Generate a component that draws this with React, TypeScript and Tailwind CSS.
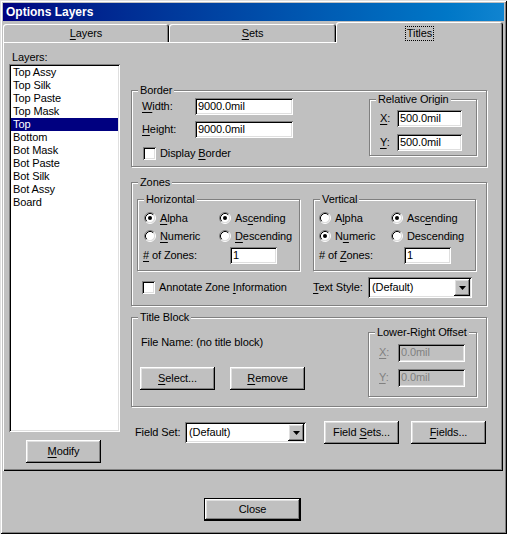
import React from 'react';

const raised =
  'bg-[#c0c0c0] shadow-[inset_-1px_-1px_0_#000,inset_1px_1px_0_#fff,inset_-2px_-2px_0_#808080,inset_2px_2px_0_#dfdfdf]';
const sunken =
  'shadow-[inset_1px_1px_0_#808080,inset_-1px_-1px_0_#fff,inset_2px_2px_0_#000,inset_-2px_-2px_0_#dfdfdf]';
const etched = 'border border-[#808080] shadow-[inset_1px_1px_0_#fff,1px_1px_0_#fff]';

// label with one underlined accelerator letter
function Acc({ text, at }: { text: string; at?: number }) {
  if (at === undefined) return <span>{text}</span>;
  return (
    <span>
      {text.slice(0, at)}
      <span className="underline underline-offset-[2px]">{text[at]}</span>
      {text.slice(at + 1)}
    </span>
  );
}

function Group({ label, className = '', children }: { label: string; className?: string; children?: React.ReactNode }) {
  return (
    <div className={`${etched} flex flex-col ${className}`}>
      <span className="-mt-[7px] ml-[6px] px-[2px] bg-[#c0c0c0] self-start h-[13px] leading-[13px]">{label}</span>
      {children}
    </div>
  );
}

function Field({ value, w, h = 17, disabled = false }: { value: string; w: number; h?: number; disabled?: boolean }) {
  return (
    <div
      className={`${sunken} ${disabled ? 'bg-[#c0c0c0] text-[#808080]' : 'bg-white text-black'} flex items-center pl-[3px] leading-[13px]`}
      style={{ width: w, height: h }}
    >
      {value}
    </div>
  );
}

function Radio({ checked }: { checked?: boolean }) {
  return (
    <svg width="12" height="12" viewBox="0 0 12 12" className="shrink-0">
      <circle cx="6" cy="6" r="4.5" fill="#fff" />
      <path d="M2.11 9.89 A5.5 5.5 0 0 1 9.89 2.11" stroke="#808080" fill="none" />
      <path d="M9.89 2.11 A5.5 5.5 0 0 1 2.11 9.89" stroke="#fff" fill="none" />
      <path d="M2.82 9.18 A4.5 4.5 0 0 1 9.18 2.82" stroke="#000" fill="none" />
      <path d="M9.18 2.82 A4.5 4.5 0 0 1 2.82 9.18" stroke="#dfdfdf" fill="none" />
      {checked && <circle cx="6" cy="6" r="2" fill="#000" />}
    </svg>
  );
}

function Check() {
  return <div className={`${sunken} bg-white w-[13px] h-[13px] shrink-0`} />;
}

function Button({ children, w = 75, className = '' }: { children: React.ReactNode; w?: number; className?: string }) {
  return (
    <div className={`${raised} h-[23px] flex items-center justify-center leading-[13px] ${className}`} style={{ width: w }}>
      <span>{children}</span>
    </div>
  );
}

function Combo({ value, w }: { value: string; w: number }) {
  return (
    <div className={`${sunken} bg-white h-[21px] flex items-center p-[2px]`} style={{ width: w }}>
      <span className="flex-1 pl-[2px] leading-[13px]">{value}</span>
      <div className={`${raised} w-[16px] h-[17px] flex items-center justify-center`}>
        <svg width="7" height="4" viewBox="0 0 7 4">
          <polygon points="0,0 7,0 3.5,4" fill="#000" />
        </svg>
      </div>
    </div>
  );
}

const layers = ['Top Assy', 'Top Silk', 'Top Paste', 'Top Mask', 'Top', 'Bottom', 'Bot Mask', 'Bot Paste', 'Bot Silk', 'Bot Assy', 'Board'];

export default function App() {
  return (
    <div className="w-[507px] h-[534px] bg-[#c0c0c0] p-[3px] flex flex-col text-[11px] tracking-[-0.1px] text-black font-['Liberation_Sans',Arial,sans-serif] shadow-[inset_1px_1px_0_#dfdfdf,inset_-1px_-1px_0_#000,inset_2px_2px_0_#fff,inset_-2px_-2px_0_#808080]">
      {/* title bar */}
      <div className="h-[18px] w-[501px] bg-linear-to-r from-[#000080] to-[#1084d0] flex items-center pl-[3px] text-white font-bold text-[12px] tracking-normal">
        Options Layers
      </div>

      {/* tabs */}
      <div className="mt-[1px] flex items-end h-[20px] w-[500px]">
        <div className="w-[166px] h-[18px] rounded-tl-[3px] rounded-tr-[3px] shadow-[inset_1px_1px_0_#fff,inset_-1px_0_0_#000,inset_-2px_0_0_#808080] flex items-center justify-center">
          <Acc text="Layers" at={0} />
        </div>
        <div className="w-[167px] h-[18px] rounded-tl-[3px] rounded-tr-[3px] shadow-[inset_1px_1px_0_#fff,inset_-1px_0_0_#000,inset_-2px_0_0_#808080] flex items-center justify-center">
          <Acc text="Sets" at={0} />
        </div>
        <div className="relative z-10 w-[167px] h-[21px] -mb-[1px] bg-[#c0c0c0] rounded-tl-[3px] rounded-tr-[3px] shadow-[inset_1px_1px_0_#fff,inset_-1px_0_0_#000,inset_-2px_0_0_#808080] flex items-start justify-center pt-[5px]">
          <span className="outline-1 outline-dotted outline-black px-[1px] leading-[13px]">Titles</span>
        </div>
      </div>

      {/* panel */}
      <div className="w-[500px] h-[429px] flex shadow-[inset_1px_1px_0_#fff,inset_-1px_-1px_0_#000,inset_-2px_-2px_0_#808080]">
        {/* left column */}
        <div className="ml-[6px] w-[111px] flex flex-col">
          <span className="mt-[9px] pl-[3px] h-[13px] leading-[13px]">Layers:</span>
          <div className={`${sunken} bg-white h-[368px] p-[2px] flex flex-col`}>
            {layers.map((l) => (
              <div key={l} className={`h-[13px] leading-[13px] pl-[2px] ${l === 'Top' ? 'bg-[#000080] text-white' : ''}`}>
                {l}
              </div>
            ))}
          </div>
          <Button className="mt-[8px] ml-[17px]">
            <Acc text="Modify" at={0} />
          </Button>
        </div>

        {/* right column */}
        <div className="ml-[11px] w-[356px] mt-[48px] flex flex-col">
          <Group label="Border" className="h-[77px]">
            <div className="flex">
              <div className="flex-1 pl-[10px] flex flex-col">
                <div className="mt-[1px] flex items-center h-[17px]">
                  <span className="w-[53px]"><Acc text="Width:" at={0} /></span>
                  <Field value="9000.0mil" w={98} />
                </div>
                <div className="mt-[6px] flex items-center h-[17px]">
                  <span className="w-[53px]"><Acc text="Height:" at={0} /></span>
                  <Field value="9000.0mil" w={98} />
                </div>
                <div className="mt-[9px] flex items-center h-[13px] ml-[1px]">
                  <Check />
                  <span className="ml-[4px]">Display <Acc text="Border" at={0} /></span>
                </div>
              </div>
              <Group label="Relative Origin" className="mt-[2px] mr-[9px] w-[108px] h-[57px]">
                <div className="mt-[4px] flex items-center h-[17px] pl-[10px]">
                  <span className="w-[17px]"><Acc text="X:" at={0} /></span>
                  <Field value="500.0mil" w={65} />
                </div>
                <div className="mt-[7px] flex items-center h-[17px] pl-[10px]">
                  <span className="w-[17px]"><Acc text="Y:" at={0} /></span>
                  <Field value="500.0mil" w={65} />
                </div>
              </Group>
            </div>
          </Group>

          <Group label="Zones" className="mt-[15px] h-[124px]">
            <div className="mt-[10px] flex">
              <Group label="Horizontal" className="ml-[5px] w-[163px] h-[72px]">
                <div className="mt-[6px] pl-[6px] flex items-center h-[12px]">
                  <div className="w-[75px] flex items-center gap-[4px]"><Radio checked /><Acc text="Alpha" at={0} /></div>
                  <div className="flex items-center gap-[4px]"><Radio checked /><Acc text="Ascending" at={2} /></div>
                </div>
                <div className="mt-[6px] pl-[6px] flex items-center h-[12px]">
                  <div className="w-[75px] flex items-center gap-[4px]"><Radio /><Acc text="Numeric" at={0} /></div>
                  <div className="flex items-center gap-[4px]"><Radio /><Acc text="Descending" at={0} /></div>
                </div>
                <div className="mt-[5px] pl-[5px] flex items-center h-[17px]">
                  <span className="w-[87px]"><Acc text="# of Zones:" at={0} /></span>
                  <Field value="1" w={47} />
                </div>
              </Group>
              <Group label="Vertical" className="ml-[13px] w-[163px] h-[72px]">
                <div className="mt-[6px] pl-[5px] flex items-center h-[12px]">
                  <div className="w-[72px] flex items-center gap-[4px]"><Radio /><Acc text="Alpha" at={1} /></div>
                  <div className="flex items-center gap-[4px]"><Radio checked /><Acc text="Ascending" at={3} /></div>
                </div>
                <div className="mt-[6px] pl-[5px] flex items-center h-[12px]">
                  <div className="w-[72px] flex items-center gap-[4px]"><Radio checked /><Acc text="Numeric" at={1} /></div>
                  <div className="flex items-center gap-[4px]"><Radio /><Acc text="Descending" /></div>
                </div>
                <div className="mt-[5px] pl-[5px] flex items-center h-[17px]">
                  <span className="w-[85px]"><Acc text="# of Zones:" at={5} /></span>
                  <Field value="1" w={47} />
                </div>
              </Group>
            </div>
            <div className="mt-[6px] pl-[10px] flex items-center h-[21px]">
              <div className="w-[171px] flex items-center gap-[4px]">
                <Check />
                <span>Annotate Zone <Acc text="Information" at={0} /></span>
              </div>
              <span className="w-[55px]"><Acc text="Text Style:" at={0} /></span>
              <Combo value="(Default)" w={104} />
            </div>
          </Group>

          <Group label="Title Block" className="mt-[11px] h-[90px]">
            <div className="flex">
              <div className="pl-[8px] flex flex-col">
                <span className="mt-[12px] ml-[1px] h-[13px] leading-[13px]">File Name: (no title block)</span>
                <div className="mt-[18px] flex gap-[15px]">
                  <Button><Acc text="Select..." at={0} /></Button>
                  <Button><Acc text="Remove" at={0} /></Button>
                </div>
              </div>
              <Group label="Lower-Right Offset" className="ml-auto mt-[8px] mr-[9px] w-[109px] h-[65px] text-black">
                <div className="mt-[5px] flex items-center h-[17px] pl-[10px] text-[#808080]">
                  <span className="w-[19px]"><Acc text="X:" at={0} /></span>
                  <Field value="0.0mil" w={67} h={18} disabled />
                </div>
                <div className="mt-[8px] flex items-center h-[17px] pl-[10px] text-[#808080]">
                  <span className="w-[19px]"><Acc text="Y:" at={0} /></span>
                  <Field value="0.0mil" w={67} h={18} disabled />
                </div>
              </Group>
            </div>
          </Group>

          <div className="mt-[14px] flex items-center h-[23px]">
            <span className="ml-[4px] w-[50px]">Field Set:</span>
            <Combo value="(Default)" w={121} />
            <Button className="ml-[18px]">Field <Acc text="Sets..." at={0} /></Button>
            <Button className="ml-[12px]"><Acc text="Fields..." at={0} /></Button>
          </div>
        </div>
      </div>

      {/* close */}
      <div className="mt-[27px] ml-[201px] w-[97px] h-[23px] border border-black">
        <div className={`${raised} w-full h-full flex items-center justify-center`}>Close</div>
      </div>
    </div>
  );
}
